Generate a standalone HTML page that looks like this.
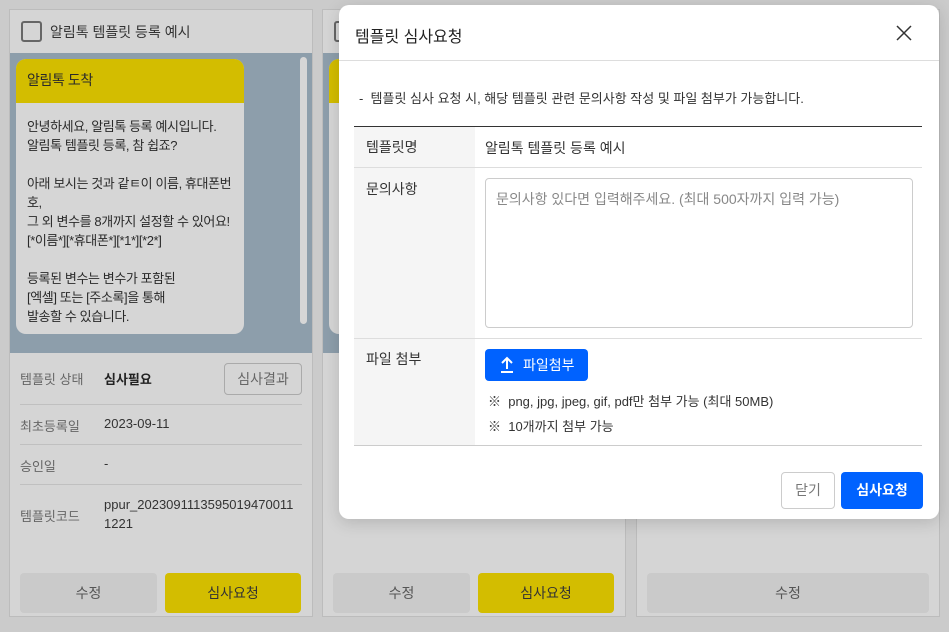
<!DOCTYPE html>
<html><head><meta charset="utf-8"><style>
*{box-sizing:border-box;margin:0;padding:0}
body{width:949px;height:632px;overflow:hidden;background:#cbcbcb;font-family:"Liberation Sans","Noto Sans CJK KR",sans-serif;position:relative;color:#222}
.a{position:absolute}
.card{position:absolute;top:9px;width:304px;height:608px;background:#d5d5d5;border:1px solid #bcbcbc}
.prev{position:absolute;left:0;right:0;top:43px;height:300px;background:#8d9eab}
.bub{position:absolute;left:6px;top:6px;width:228px;height:275px;background:#d6d6d6;border-radius:10px;overflow:hidden;font-size:13px;line-height:19px;color:#2a2a2a;letter-spacing:-0.4px;white-space:nowrap}
.bub .h{background:#d3bd00;height:44px;padding:12px 11px;font-size:14px}
.bub .b{padding:14px 11px}
.row{position:absolute;left:10px;right:10px;border-bottom:1px solid #c0c0c0;font-size:13px;color:#333}
.row .l{position:absolute;left:0;color:#666}
.row .v{position:absolute;left:84px}
.btn{position:absolute;top:563px;height:40px;border-radius:4px;font-size:14px;text-align:center;line-height:40px}
.modal{position:absolute;left:339px;top:5px;width:600px;height:514px;background:#fff;border-radius:10px;box-shadow:0 4px 16px rgba(0,0,0,.15)}
.lab{position:absolute;left:15px;width:121px;background:#f5f5f5;font-size:14px;color:#333;padding-left:12px}
</style></head><body>
<div class="card" style="left:9px">
 <div class="a" style="left:11px;top:11px;width:21px;height:21px;border:2px solid #666;border-radius:3px"></div>
 <div class="a" style="left:40px;top:12px;font-size:14px;color:#333">알림톡 템플릿 등록 예시</div>
 <div class="prev">
  <div class="bub"><div class="h">알림톡 도착</div><div class="b">안녕하세요, 알림톡 등록 예시입니다.<br>알림톡 템플릿 등록, 참 쉽죠?<br><br>아래 보시는 것과 같ㅌ이 이름, 휴대폰번<br>호,<br>그 외 변수를 8개까지 설정할 수 있어요!<br>[*이름*][*휴대폰*][*1*][*2*]<br><br>등록된 변수는 변수가 포함된<br>[엑셀] 또는 [주소록]을 통해<br>발송할 수 있습니다.</div></div>
  <div class="a" style="left:290px;top:4px;width:7px;height:267px;background:#d6d6d6;border-radius:4px"></div>
 </div>
 <div class="row" style="top:343px;height:52px"><span class="l" style="top:16px">템플릿 상태</span><span class="v" style="top:16px;font-weight:bold;color:#222">심사필요</span><div class="a" style="right:0;top:10px;width:78px;height:32px;border:1px solid #aaa;border-radius:4px;text-align:center;line-height:30px;color:#666;font-size:14px">심사결과</div></div>
 <div class="row" style="top:395px;height:40px"><span class="l" style="top:11px">최초등록일</span><span class="v" style="top:11px">2023-09-11</span></div>
 <div class="row" style="top:435px;height:40px"><span class="l" style="top:11px">승인일</span><span class="v" style="top:11px">-</span></div>
 <div class="row" style="top:475px;height:60px;border:0"><span class="l" style="top:21px">템플릿코드</span><span class="v" style="top:10px;line-height:19px">ppur_2023091113595019470011<br>1221</span></div>
 <div class="btn" style="left:10px;width:137px;background:#cacaca;color:#555">수정</div>
 <div class="btn" style="left:155px;width:136px;background:#d3bd00;color:#333">심사요청</div>
</div>
<div class="card" style="left:322px">
 <div class="a" style="left:11px;top:11px;width:21px;height:21px;border:2px solid #666;border-radius:3px"></div>
 <div class="prev"><div class="bub"><div class="h"></div></div></div>
 <div class="a" style="left:95px;top:494px;font-size:13px;color:#333">8745</div>
 <div class="btn" style="left:10px;width:137px;background:#cacaca;color:#555">수정</div>
 <div class="btn" style="left:155px;width:136px;background:#d3bd00;color:#333">심사요청</div>
</div>
<div class="card" style="left:636px">
 <div class="a" style="left:95px;top:494px;font-size:13px;color:#333">6904</div>
 <div class="btn" style="left:10px;width:282px;background:#cacaca;color:#555">수정</div>
</div>
<div class="modal">
 <div class="a" style="left:16px;top:18px;font-size:16px;color:#222">템플릿 심사요청</div>
 <svg class="a" style="left:555px;top:18px" width="20" height="20" viewBox="0 0 20 20"><path d="M3 3L17 17M17 3L3 17" stroke="#333" stroke-width="1.5"/></svg>
 <div class="a" style="left:0;right:0;top:55px;border-top:1px solid #ddd"></div>
 <div class="a" style="left:20px;top:83px;font-size:13px;color:#333">-&nbsp; 템플릿 심사 요청 시, 해당 템플릿 관련 문의사항 작성 및 파일 첨부가 가능합니다.</div>
 <div class="a" style="left:15px;top:121px;width:568px;border-top:1px solid #333"></div>
 <div class="lab" style="top:122px;height:40px;line-height:40px">템플릿명</div>
 <div class="a" style="left:146px;top:133px;font-size:14px;color:#333">알림톡 템플릿 등록 예시</div>
 <div class="a" style="left:15px;top:162px;width:568px;border-top:1px solid #ddd"></div>
 <div class="lab" style="top:163px;height:170px;padding-top:11px">문의사항</div>
 <div class="a" style="left:146px;top:173px;width:428px;height:150px;border:1px solid #ccc;border-radius:4px;padding:10px;font-size:14px;color:#888">문의사항 있다면 입력해주세요. (최대 500자까지 입력 가능)</div>
 <div class="a" style="left:15px;top:333px;width:568px;border-top:1px solid #ddd"></div>
 <div class="lab" style="top:334px;height:106px;padding-top:10px">파일 첨부</div>
 <div class="a" style="left:146px;top:344px;width:103px;height:32px;background:#0062ff;border-radius:4px;color:#fff;font-size:14px;line-height:32px;padding-left:38px">파일첨부</div>
 <svg class="a" style="left:160px;top:351px" width="16" height="18" viewBox="0 0 16 18"><path d="M8 13V2M3 7L8 2L13 7M2 16H14" stroke="#fff" stroke-width="2" fill="none"/></svg>
 <div class="a" style="left:149px;top:386px;font-size:13px;color:#333">※&nbsp; png, jpg, jpeg, gif, pdf만 첨부 가능 (최대 50MB)</div>
 <div class="a" style="left:149px;top:411px;font-size:13px;color:#333">※&nbsp; 10개까지 첨부 가능</div>
 <div class="a" style="left:15px;top:440px;width:568px;border-top:1px solid #ccc"></div>
 <div class="a" style="left:442px;top:467px;width:54px;height:37px;border:1px solid #ccc;border-radius:4px;text-align:center;line-height:35px;font-size:14px;color:#777">닫기</div>
 <div class="a" style="left:502px;top:467px;width:82px;height:37px;background:#0062ff;border-radius:4px;text-align:center;line-height:37px;font-size:14px;color:#fff;font-weight:bold">심사요청</div>
</div>
</body></html>
